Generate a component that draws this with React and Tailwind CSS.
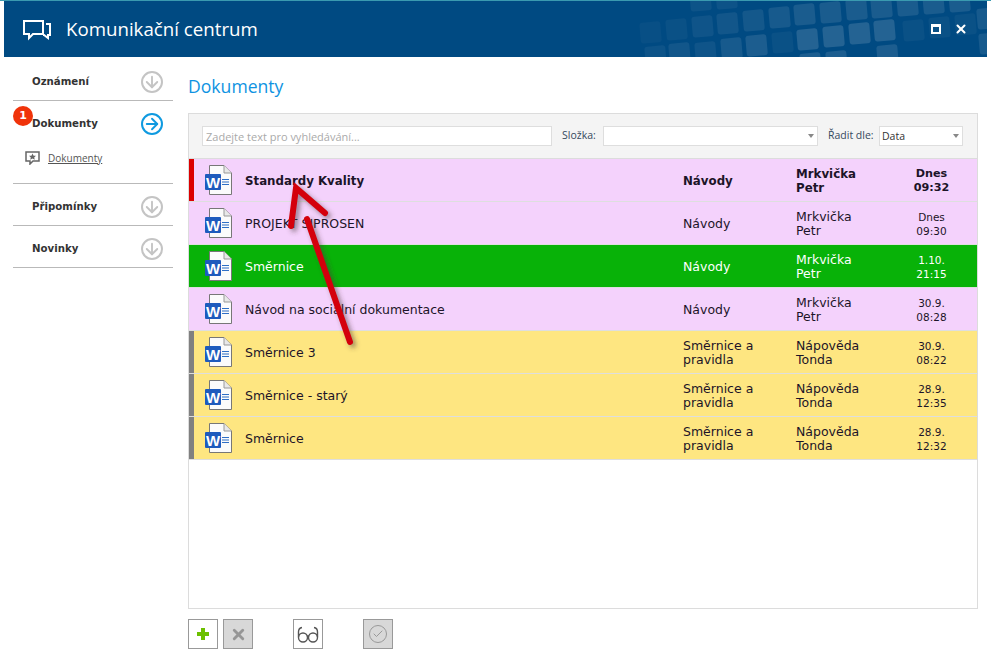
import { ArrowDown, ArrowRight, Check, X } from 'lucide-react'

const documents = [
  { title: 'Standardy Kvality', folder: ['Návody'], author: ['Mrkvička', 'Petr'], date: ['Dnes', '09:32'], bg: 'bg-[#f4d2fc]', marker: 'bg-[#dc0000]', bold: true },
  { title: 'PROJEKT SIPROSEN', folder: ['Návody'], author: ['Mrkvička', 'Petr'], date: ['Dnes', '09:30'], bg: 'bg-[#f4d2fc]', marker: '' },
  { title: 'Směrnice', folder: ['Návody'], author: ['Mrkvička', 'Petr'], date: ['1.10.', '21:15'], bg: 'bg-[#08b208]', marker: '', light: true },
  { title: 'Návod na sociální dokumentace', folder: ['Návody'], author: ['Mrkvička', 'Petr'], date: ['30.9.', '08:28'], bg: 'bg-[#f4d2fc]', marker: '' },
  { title: 'Směrnice 3', folder: ['Směrnice a', 'pravidla'], author: ['Nápověda', 'Tonda'], date: ['30.9.', '08:22'], bg: 'bg-[#fee681]', marker: 'bg-[#808080]' },
  { title: 'Směrnice - starý', folder: ['Směrnice a', 'pravidla'], author: ['Nápověda', 'Tonda'], date: ['28.9.', '12:35'], bg: 'bg-[#fee681]', marker: 'bg-[#808080]' },
  { title: 'Směrnice', folder: ['Směrnice a', 'pravidla'], author: ['Nápověda', 'Tonda'], date: ['28.9.', '12:32'], bg: 'bg-[#fee681]', marker: 'bg-[#808080]' },
]

// header background squares: x, y, opacity
const tiles = [
  [797, 29, 0.14], [823, 26, 0.14], [849, 23, 0.14], [874, 20, 0.14],
  [721, 38, 0.09], [746, 35, 0.11], [800, 53, 0.11], [826, 51, 0.11], [877, 45, 0.11],
  [692, 16, 0.06], [717, 13, 0.07], [743, 10, 0.08], [769, 7, 0.09], [794, 4, 0.1], [820, 2, 0.1],
  [846, -1, 0.1], [871, -3, 0.1], [897, -5, 0.1], [923, -7, 0.1], [949, -9, 0.1],
  [977, 8, 0.09], [979, 33, 0.09], [669, 43, 0.07], [645, 46, 0.05], [690, -10, 0.05], [716, -12, 0.05],
  [666, 19, 0.04], [640, 22, 0.03], [695, 42, 0.06], [772, 32, 0.04], [903, 20, 0.04], [929, 17, 0.04], [955, 14, 0.04],
]

function WordIcon() {
  return (
    <svg width="27" height="30" viewBox="0 0 27 30" className="shrink-0">
      <path d="M4.5 .5H19L26.5 8V29.5H4.5Z" fill="#fbfbfb" stroke="#777" />
      <path d="M19 .5V8H26.5" fill="#e8e8e8" stroke="#999" />
      <rect x="17" y="14" width="7" height="1" fill="#2f6fc6" />
      <rect x="17" y="16.5" width="7" height="1" fill="#2f6fc6" />
      <rect x="17" y="19" width="7" height="1" fill="#2f6fc6" />
      <rect y="9" width="16" height="16" rx="1" fill="#1e5bbd" />
      <text x="8" y="22.5" textAnchor="middle" fill="#fff" fontFamily="Liberation Sans, sans-serif" fontSize="15" fontWeight="700">W</text>
    </svg>
  )
}

function SidebarItem({ label, active, badge, children }) {
  return (
    <div className="border-b border-[#b9b9b9] pl-[19px] pr-[10px]">
      <div className="relative flex h-[41px] items-center justify-between pt-[5px]">
        {badge && (
          <span className="absolute left-[-19px] top-[5px] flex h-5 w-5 items-center justify-center rounded-full bg-[#f0330a] text-[11px] font-bold text-white">
            {badge}
          </span>
        )}
        <span className="text-[10.2px] font-bold text-[#333]">{label}</span>
        <span className={`flex h-[22px] w-[22px] items-center justify-center rounded-full border-2 ${active ? 'border-[#0f9ae0] text-[#0f9ae0]' : 'border-[#c4c4c4] text-[#c4c4c4]'}`}>
          {active ? <ArrowRight size={18} strokeWidth={2.5} /> : <ArrowDown size={18} strokeWidth={2.5} />}
        </span>
      </div>
      {children}
    </div>
  )
}

function ToolButton({ disabled, children, className = '' }) {
  return (
    <button className={`flex h-[30px] w-[30px] items-center justify-center border border-[#999] ${disabled ? 'bg-[#d8d8d8]' : 'bg-white'} ${className}`}>
      {children}
    </button>
  )
}

function DocumentRow({ doc }) {
  const text = doc.light ? 'text-white' : 'text-[#1c1428]'
  const cell = doc.bold ? 'text-[11.8px] font-bold' : 'text-[12.5px]'
  const dateCell = doc.bold ? 'text-[11.2px] font-bold' : 'text-[10.5px]'
  return (
    <div className={`flex h-[43px] items-center border-b border-[#dedede] ${doc.bg} ${text}`}>
      <div className={`h-full w-[5px] shrink-0 ${doc.marker}`} />
      <div className="ml-[11px] w-[40px] shrink-0">
        <WordIcon />
      </div>
      <div className={`w-[438px] shrink-0 ${doc.bold ? 'pt-[4px]' : 'pt-[2px]'} ${cell}`}>{doc.title}</div>
      <div className={`w-[113px] shrink-0 pt-[2px] leading-[14px] ${cell}`}>
        {doc.folder.map((line) => <div key={line}>{line}</div>)}
      </div>
      <div className={`w-[100px] shrink-0 pt-[2px] leading-[14px] ${cell}`}>
        {doc.author.map((line) => <div key={line}>{line}</div>)}
      </div>
      <div className={`w-[71px] shrink-0 pt-[2px] text-center leading-[14px] ${dateCell}`}>
        {doc.date.map((line) => <div key={line}>{line}</div>)}
      </div>
    </div>
  )
}

function SelectArrow() {
  return <span className="absolute right-[3px] top-[7px] h-0 w-0 border-x-[3.5px] border-t-[4px] border-x-transparent border-t-[#888]" />
}

function App() {
  return (
    <div className="relative h-[658px] w-[991px] overflow-hidden bg-white font-['DejaVu_Sans',sans-serif]">
      <div className="h-px bg-[#3a9ab0]" />
      <header className="relative mx-1 flex h-[56px] items-center overflow-hidden bg-[#004a82] text-white">
        <svg className="absolute left-0 top-0" width="983" height="56">
          {tiles.map(([x, y, opacity], index) => (
            <rect key={index} x={x - 4} y={y - 1} width="21" height="21" rx="3" fill="#ffffff" fillOpacity={opacity} transform={`rotate(-5 ${x + 6} ${y + 9})`} />
          ))}
        </svg>
        <svg className="relative ml-[18px] mt-[3px]" width="30" height="21" viewBox="0 0 30 21" fill="none" stroke="#fff" strokeWidth="2">
          <path d="M2 1H21V14H11L7 18V14H2Z" />
          <path d="M24 4H28V15H26V18L22 15H21" />
        </svg>
        <h1 className="relative ml-[14px] font-['Open_Sans',sans-serif] text-[18.7px]">Komunikační centrum</h1>
        <div className="absolute right-[19px] top-[21px] flex items-center gap-[13px]">
          <span className="h-[10px] w-[10px] border-2 border-t-[3px] border-white" />
          <X size={14} strokeWidth={3.5} />
        </div>
      </header>

      <div className="flex">
        <aside className="ml-[13px] w-[160px] pt-[2px]">
          <SidebarItem label="Oznámení" />
          <SidebarItem label="Dokumenty" active badge="1">
            <div className="flex h-[41px] items-start gap-[8px] pt-[9px]">
              <svg className="ml-[-7px]" width="15" height="14" viewBox="0 0 15 14" fill="none" stroke="#666" strokeWidth="1.5">
                <path d="M1 1H14V10H8L5 13V10H1Z" />
                <path d="M7.5 2.5L8.6 4.8H11L9.2 6.4L9.8 8.8L7.5 7.5L5.2 8.8L5.8 6.4L4 4.8H6.4Z" fill="#666" stroke="none" />
              </svg>
              <span className="font-['Open_Sans',sans-serif] text-[10px] leading-[15px] text-[#555] underline">Dokumenty</span>
            </div>
          </SidebarItem>
          <SidebarItem label="Připomínky" />
          <SidebarItem label="Novinky" />
        </aside>

        <main className="ml-[15px] w-[790px]">
          <h2 className="mt-[16px] h-[40px] font-['Open_Sans',sans-serif] text-[17.6px] leading-[27px] text-[#0f93e2]">Dokumenty</h2>
          <section className="h-[496px] border border-[#dcdcdc]">
            <div className="flex h-[45px] items-center border-b border-[#dcdcdc] bg-[#f4f4f4] pl-[13px] font-['Open_Sans',sans-serif]">
              <input
                placeholder="Zadejte text pro vyhledávání..."
                className="h-[20px] w-[350px] border border-[#dedede] bg-white px-[3px] text-[11px] outline-none placeholder:text-[#aaa]"
              />
              <span className="ml-[10px] w-[41px] text-[10.5px] text-[#34495e]">Složka:</span>
              <div className="relative h-[20px] w-[215px] border border-[#dedede] bg-white">
                <SelectArrow />
              </div>
              <span className="ml-[10px] w-[51px] text-[10.5px] text-[#34495e]">Řadit dle:</span>
              <div className="relative h-[20px] w-[84px] border border-[#dedede] bg-white pl-[2px] text-[10.5px] leading-[18px] text-[#333]">
                Data
                <SelectArrow />
              </div>
            </div>
            {documents.map((doc, index) => <DocumentRow key={index} doc={doc} />)}
          </section>
          <div className="mt-[10px] flex">
            <ToolButton>
              <svg width="12" height="12" viewBox="0 0 12 12" fill="#6cc000">
                <path d="M4 0H8V4H12V8H8V12H4V8H0V4H4Z" />
              </svg>
            </ToolButton>
            <ToolButton disabled className="ml-[5px]"><X size={17} strokeWidth={4} className="text-[#969696]" /></ToolButton>
            <ToolButton className="ml-[40px]">
              <svg width="22" height="17" viewBox="0 0 22 17" fill="none" stroke="#555" strokeWidth="1.4">
                <circle cx="6" cy="11.5" r="4.5" />
                <circle cx="16" cy="11.5" r="4.5" />
                <path d="M10 10.5Q11 9.5 12 10.5" />
                <path d="M1.5 11V6Q1.5 2 5 1.5" />
                <path d="M20.5 11V6Q20.5 2 17 1.5" />
              </svg>
            </ToolButton>
            <ToolButton disabled className="ml-[40px]">
              <span className="flex h-[18px] w-[18px] items-center justify-center rounded-full border-[1.5px] border-[#999]">
                <Check size={12} className="text-[#999]" />
              </span>
            </ToolButton>
          </div>
        </main>
      </div>

      {/* red annotation arrow over the list */}
      <svg className="pointer-events-none absolute left-0 top-0" width="991" height="658" fill="none">
        <defs>
          <filter id="arrow-shadow" x="-30%" y="-30%" width="160%" height="160%">
            <feGaussianBlur stdDeviation="2.5" />
          </filter>
        </defs>
        <g stroke="#4a3a3a" strokeOpacity="0.55" strokeWidth="6" strokeLinecap="round" strokeLinejoin="miter" transform="translate(3 3)" filter="url(#arrow-shadow)">
          <path d="M350 342L307 219" />
          <path d="M291 226L296 188L325 213" />
        </g>
        <g stroke="#d4000c" strokeWidth="6" strokeLinecap="round" strokeLinejoin="miter">
          <path d="M350 342L307 219" />
          <path d="M291 226L296 188L325 213" />
        </g>
      </svg>
    </div>
  )
}

export default App
